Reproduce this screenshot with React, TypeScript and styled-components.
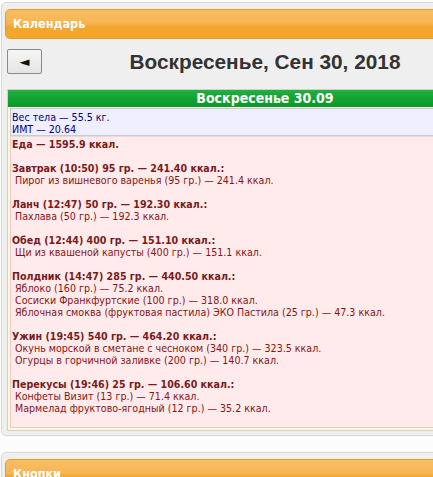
import React from 'react'
import styled, { createGlobalStyle } from 'styled-components'

const GlobalStyle = createGlobalStyle`
  body {
    margin: 0;
    background: #fbfcfb;
    overflow: hidden;
    font-family: "DejaVu Sans Condensed", "DejaVu Sans", sans-serif;
  }
`

type Item = { name: string }
type Meal = { title: string; items: Item[] }

const meals: Meal[] = [
  {
    title: 'Завтрак (10:50) 95 гр. — 241.40 ккал.:',
    items: [{ name: 'Пирог из вишневого варенья (95 гр.) — 241.4 ккал.' }]
  },
  {
    title: 'Ланч (12:47) 50 гр. — 192.30 ккал.:',
    items: [{ name: 'Пахлава (50 гр.) — 192.3 ккал.' }]
  },
  {
    title: 'Обед (12:44) 400 гр. — 151.10 ккал.:',
    items: [{ name: 'Щи из квашеной капусты (400 гр.) — 151.1 ккал.' }]
  },
  {
    title: 'Полдник (14:47) 285 гр. — 440.50 ккал.:',
    items: [
      { name: 'Яблоко (160 гр.) — 75.2 ккал.' },
      { name: 'Сосиски Франкфуртские (100 гр.) — 318.0 ккал.' },
      { name: 'Яблочная смоква (фруктовая пастила) ЭКО Пастила (25 гр.) — 47.3 ккал.' }
    ]
  },
  {
    title: 'Ужин (19:45) 540 гр. — 464.20 ккал.:',
    items: [
      { name: 'Окунь морской в сметане с чесноком (340 гр.) — 323.5 ккал.' },
      { name: 'Огурцы в горчичной заливке (200 гр.) — 140.7 ккал.' }
    ]
  },
  {
    title: 'Перекусы (19:46) 25 гр. — 106.60 ккал.:',
    items: [
      { name: 'Конфеты Визит (13 гр.) — 71.4 ккал.' },
      { name: 'Мармелад фруктово-ягодный (12 гр.) — 35.2 ккал.' }
    ]
  }
]

export default function App() {
  return (
    <>
      <GlobalStyle />
      <Page>
        <Widget>
          <WidgetHeader>Календарь</WidgetHeader>
          <NavRow>
            <NavButton>◄</NavButton>
            <DateTitle>Воскресенье, Сен 30, 2018</DateTitle>
            <NavSpacer />
          </NavRow>
          <DayPanel>
            <DayTitle>Воскресенье 30.09</DayTitle>
            <DayBody>
              <WeightBox>
                <div>Вес тела — 55.5 кг.</div>
                <div>ИМТ — 20.64</div>
              </WeightBox>
              <FoodBox>
                <MealTitle>Еда — 1595.9 ккал.</MealTitle>
                {meals.map(meal => (
                  <MealGroup key={meal.title}>
                    <MealTitle>{meal.title}</MealTitle>
                    {meal.items.map(item => (
                      <MealItem key={item.name}>{item.name}</MealItem>
                    ))}
                  </MealGroup>
                ))}
              </FoodBox>
            </DayBody>
          </DayPanel>
        </Widget>
        <Widget>
          <WidgetHeader>Кнопки</WidgetHeader>
        </Widget>
      </Page>
    </>
  )
}

const Page = styled.div`
  width: 528px;
  padding: 2px 0 0 1px;
  display: flex;
  flex-direction: column;
  gap: 16px;
`

const Widget = styled.div`
  border: 1px solid #d9d9d9;
  border-radius: 5px;
  background: #efefef;
  padding: 6px 5px 4px 3px;
`

const WidgetHeader = styled.div`
  height: 28px;
  border: 1px solid #e99b22;
  border-radius: 5px;
  background: linear-gradient(to bottom, #f8be62 0%, #f7b655 45%, #f4a52c 60%, #f5a62c 100%);
  color: #fff;
  font-weight: bold;
  font-size: 12.5px;
  line-height: 28px;
  padding-left: 7px;
`

const NavRow = styled.div`
  display: flex;
  align-items: center;
  margin: 10px 0 0 2px;
  height: 25px;
`

const NavButton = styled.div`
  width: 33px;
  height: 23px;
  border: 1px solid #8a8a8a;
  border-radius: 2px;
  background: linear-gradient(to bottom, #f6f6f6, #e4e4e4);
  color: #111;
  font-family: "DejaVu Sans", sans-serif;
  font-size: 13px;
  line-height: 23px;
  text-align: center;
`

const NavSpacer = styled.div`
  width: 35px;
`

const DateTitle = styled.div`
  flex: 1;
  text-align: center;
  font-family: "Liberation Sans", Arial, sans-serif;
  font-weight: bold;
  font-size: 20.8px;
  color: #333;
`

const DayPanel = styled.div`
  margin: 15px 0 0 2px;
  border: 1px solid #cfcfcf;
  background: #fffbd6;
`

const DayTitle = styled.div`
  height: 17px;
  background: linear-gradient(to bottom, #22b040 0%, #12a232 50%, #0a992a 100%);
  color: #fff;
  font-weight: bold;
  font-size: 14px;
  line-height: 17px;
  text-align: center;
`

const DayBody = styled.div`
  padding: 1px 2px 2px 2px;
  font-size: 10.6px;
  line-height: 12px;
`

const WeightBox = styled.div`
  border: 1px solid #c9c9de;
  background: #eeeefd;
  color: #000080;
  padding: 2px 1px 0 1px;
`

const FoodBox = styled.div`
  border: 1px solid #f0c6c6;
  border-top-color: #f3d8c8;
  background: #ffebeb;
  color: #8a1414;
  padding: 1px 1px 13px 1px;
`

const MealGroup = styled.div`
  margin-top: 12px;
`

const MealTitle = styled.div`
  font-weight: bold;
  color: #7a1a1a;
`

const MealItem = styled.div`
  padding-left: 3px;
`
